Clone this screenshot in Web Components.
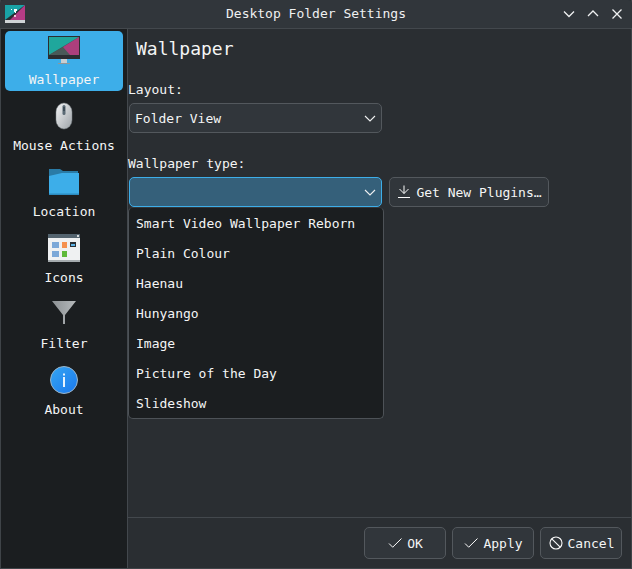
<!DOCTYPE html>
<html>
<head>
<meta charset="utf-8">
<title>Desktop Folder Settings</title>
<style>
html, body { margin: 0; height: 100%; background: #2a2e32; }
body { font: 13px/16px "DejaVu Sans Mono", monospace; color: #f4f5f5; }
</style>
</head>
<body>

<settings-window>
    <title-bar slot="top" caption="Desktop Folder Settings"></title-bar>
    <side-bar slot="side">
        <nav-item label="Wallpaper" icon="wallpaper" selected></nav-item>
        <nav-item label="Mouse Actions" icon="mouse"></nav-item>
        <nav-item label="Location" icon="folder"></nav-item>
        <nav-item label="Icons" icon="icons"></nav-item>
        <nav-item label="Filter" icon="filter"></nav-item>
        <nav-item label="About" icon="about"></nav-item>
    </side-bar>
    <wallpaper-page slot="main">
        <field-label style="margin-top:21px">Layout:</field-label>
        <combo-box text="Folder View"></combo-box>
        <field-label style="margin-top:22px">Wallpaper type:</field-label>
        <div style="display:flex;gap:7px">
            <combo-box focused>
                <popup-menu>
                    <menu-row>Smart Video Wallpaper Reborn</menu-row>
                    <menu-row>Plain Colour</menu-row>
                    <menu-row>Haenau</menu-row>
                    <menu-row>Hunyango</menu-row>
                    <menu-row>Image</menu-row>
                    <menu-row>Picture of the Day</menu-row>
                    <menu-row>Slideshow</menu-row>
                </popup-menu>
            </combo-box>
            <push-button icon="download" style="width:160px;height:30px">Get New Plugins…</push-button>
        </div>
    </wallpaper-page>
    <button-bar slot="bottom">
        <push-button icon="check">OK</push-button>
        <push-button icon="check">Apply</push-button>
        <push-button icon="cancel">Cancel</push-button>
    </button-bar>
</settings-window>

<script>
// icons for the side bar, 32x32
const NAV_ICONS = {
    wallpaper: `
        <svg width="32" height="32" viewBox="0 0 32 32">
            <rect x="0" y="2" width="32" height="23" fill="#2b2d30"/>
            <rect x="1" y="3" width="30" height="18" fill="#3e4a4e"/>
            <polygon points="1,3 31,3 1,21" fill="#1fa79c"/>
            <polygon points="31,3 31,21 13,21 15,13" fill="#ad3f7c"/>
            <polygon points="1,21 15,13 22,21" fill="#4a5a58"/>
            <rect x="13" y="25" width="6" height="4" fill="#c9ced1"/>
            <rect x="10" y="29" width="12" height="1" fill="#8f979b"/>
        </svg>`,
    mouse: `
        <svg width="32" height="32" viewBox="0 0 32 32">
            <defs><linearGradient id="m" x1="0" y1="0" x2="1" y2="1">
                <stop offset="0" stop-color="#f4f5f6"/><stop offset="1" stop-color="#9da3a8"/>
            </linearGradient></defs>
            <rect x="8" y="3" width="16" height="26" rx="8" ry="9" fill="url(#m)" stroke="#7d8489" stroke-width="0.500"/>
            <rect x="14.500" y="5" width="3" height="10" rx="1.500" fill="#5b6a75"/>
            <rect x="15" y="7" width="2" height="4" fill="#3e4d58"/>
        </svg>`,
    folder: `
        <svg width="32" height="32" viewBox="0 0 32 32">
            <path d="M1 3h11l3 2h15v6H1z" fill="#2a7ba6"/>
            <path d="M1 10l13-3h17v22H1z" fill="#3daee9"/>
            <rect x="1" y="27.500" width="30" height="1.500" fill="#2c8bc0"/>
        </svg>`,
    icons: `
        <svg width="32" height="32" viewBox="0 0 32 32">
            <rect x="0" y="2" width="32" height="28" fill="#eff1f2"/>
            <rect x="0" y="2" width="32" height="4" fill="#54646f"/>
            <rect x="29" y="3" width="2" height="2" fill="#d6dadc"/>
            <rect x="0" y="28" width="32" height="2" fill="#a5abae"/>
            <rect x="4" y="10" width="7" height="6" fill="#7ba8d8"/>
            <rect x="4" y="19" width="7" height="6" fill="#7ba8d8"/>
            <rect x="14" y="10" width="5" height="6" fill="#f5914f"/>
            <rect x="14" y="19" width="5" height="6" fill="#5fba3a"/>
            <rect x="22" y="10" width="6" height="5" fill="#2b2f33"/>
            <rect x="23" y="12" width="4" height="2" fill="#5cb3e6"/>
        </svg>`,
    filter: `
        <svg width="32" height="32" viewBox="0 0 32 32">
            <defs><linearGradient id="f" x1="0" y1="0" x2="1" y2="0">
                <stop offset="0" stop-color="#8c9194"/><stop offset="1" stop-color="#b5b9bb"/>
            </linearGradient></defs>
            <polygon points="4,3 28,3 17,17 17,26 15,26 15,17" fill="url(#f)"/>
        </svg>`,
    about: `
        <svg width="32" height="32" viewBox="0 0 32 32">
            <defs><linearGradient id="a" x1="0" y1="0" x2="1" y2="1">
                <stop offset="0" stop-color="#35a6f2"/><stop offset="1" stop-color="#1a78ee"/>
            </linearGradient></defs>
            <circle cx="16" cy="16" r="13.500" fill="url(#a)" stroke="#9cb4c6" stroke-width="1"/>
            <rect x="15" y="9.500" width="2" height="2" fill="#e8f4fd"/>
            <rect x="15" y="13" width="2" height="10" fill="#e8f4fd"/>
        </svg>`
};

const SMALL_ICONS = {
    check: '<path d="M2 8.500l3.700 3.700L14.500 3.500" fill="none" stroke="#fcfcfc"/>',
    cancel: '<circle cx="8" cy="8" r="6" fill="none" stroke="#fcfcfc" stroke-width="1.100"/><path d="M3.800 3.800l8.400 8.400" stroke="#fcfcfc" stroke-width="1.100"/>',
    download: '<path d="M8 1.500v8M3.500 5l4.500 4.500L12.500 5M2 13.500h12" fill="none" stroke="#fcfcfc"/>'
};

class SettingsWindow extends HTMLElement {
    constructor() {
        super();
        this.attachShadow({ mode: 'open' }).innerHTML = `
            <style>
                :host {
                    display: grid;
                    box-sizing: border-box;
                    width: 632px;
                    height: 569px;
                    grid-template-columns: 127px 1fr;
                    grid-template-rows: 29px 1fr 51px;
                    border: 1px solid #3f4448;
                    border-top: 0;
                    background: #2a2e32;
                }
                .top { grid-column: 1 / 3; display: block; }
                .side { grid-row: 2 / 4; display: block; }
            </style>
            <div class="top"><slot name="top"></slot></div>
            <div class="side"><slot name="side"></slot></div>
            <slot name="main"></slot>
            <slot name="bottom"></slot>
        `;
    }
}

class TitleBar extends HTMLElement {
    constructor() {
        super();
        this.attachShadow({ mode: 'open' }).innerHTML = `
            <style>
                :host {
                    display: grid;
                    grid-template-columns: 1fr auto 1fr;
                    align-items: center;
                    box-sizing: border-box;
                    height: 29px;
                    margin: 0 -1px;
                    padding: 0 7px 1px 7px;
                    background: #31363b;
                    border-bottom: 1px solid #43484d;
                    border-radius: 4px 4px 0 0;
                }
                .caption { text-align: center; color: #eff0f1; }
                .controls { display: flex; gap: 8px; justify-content: flex-end; }
                svg { display: block; }
                .app { margin-left: -2px; }
            </style>
            <svg class="app" width="20" height="20" viewBox="0 0 20 20">
                <rect y="1" width="20" height="18" fill="#2a2e32"/>
                <polygon points="0,1 20,1 0,16" fill="#19a3a6"/>
                <polygon points="20,1 20,16 5,16" fill="#b53c85"/>
                <path d="M9 5h3v2h-1v2h-1V8H9z" fill="#fff"/>
                <rect x="6" y="5" width="1" height="1" fill="#fff"/>
                <rect x="9" y="11" width="2" height="2" fill="#f5c6d8"/>
                <rect y="16" width="20" height="3" fill="#cfd3d6"/>
            </svg>
            <div class="caption">${this.getAttribute('caption')}</div>
            <div class="controls">
                <svg width="16" height="16" viewBox="0 0 16 16"><path d="M3 5.500l5 5 5-5" fill="none" stroke="#eff0f1" stroke-width="1.300"/></svg>
                <svg width="16" height="16" viewBox="0 0 16 16"><path d="M3 10l5-5 5 5" fill="none" stroke="#eff0f1" stroke-width="1.300"/></svg>
                <svg width="16" height="16" viewBox="0 0 16 16"><path d="M3.500 3.500l9 9M12.500 3.500l-9 9" fill="none" stroke="#eff0f1" stroke-width="1.300"/></svg>
            </div>
        `;
    }
}

class SideBar extends HTMLElement {
    constructor() {
        super();
        this.attachShadow({ mode: 'open' }).innerHTML = `
            <style>
                :host {
                    display: flex;
                    flex-direction: column;
                    gap: 6px;
                    box-sizing: border-box;
                    height: 539px;
                    padding: 2px 4px 0;
                    background: #1b1e20;
                    border-right: 1px solid #43484d;
                }
            </style>
            <slot></slot>
        `;
    }
}

class NavItem extends HTMLElement {
    constructor() {
        super();
        const icon = NAV_ICONS[this.getAttribute('icon')];
        this.attachShadow({ mode: 'open' }).innerHTML = `
            <style>
                :host {
                    display: flex;
                    flex-direction: column;
                    align-items: center;
                    height: 60px;
                    box-sizing: border-box;
                    padding-top: 3px;
                    border-radius: 5px;
                    white-space: nowrap;
                }
                :host([selected]) { background: #3daee9; }
                svg { display: block; }
                .label { margin-top: 6px; }
            </style>
            ${icon}
            <div class="label">${this.getAttribute('label')}</div>
        `;
    }
}

class WallpaperPage extends HTMLElement {
    constructor() {
        super();
        this.attachShadow({ mode: 'open' }).innerHTML = `
            <style>
                :host { display: block; padding-top: 9px; }
                h1 {
                    margin: 0 0 0 8px;
                    font-size: 18px;
                    line-height: 22px;
                    font-weight: normal;
                }
            </style>
            <h1>Wallpaper</h1>
            <slot></slot>
        `;
    }
}

class FieldLabel extends HTMLElement {
    constructor() {
        super();
        this.attachShadow({ mode: 'open' }).innerHTML = `
            <style>:host { display: block; padding-top: 1px; margin-bottom: 5px; }</style>
            <slot></slot>
        `;
    }
}

class ComboBox extends HTMLElement {
    constructor() {
        super();
        this.attachShadow({ mode: 'open' }).innerHTML = `
            <style>
                :host {
                    display: flex;
                    align-items: center;
                    position: relative;
                    box-sizing: border-box;
                    width: 253px;
                    height: 30px;
                    margin-left: 1px;
                    padding: 0 3px 0 5px;
                    background: #31363b;
                    border: 1px solid #53585d;
                    border-radius: 5px;
                }
                :host([focused]) { background: #35607a; border-color: #3daee9; }
                .text { flex: 1; margin-top: 2px; }
                svg { display: block; }
            </style>
            <div class="text">${this.getAttribute('text') || ''}</div>
            <svg width="16" height="16" viewBox="0 0 16 16"><path d="M3 6l5 5 5-5" fill="none" stroke="#eff0f1" stroke-width="1.100"/></svg>
            <slot></slot>
        `;
    }
}

// the open list of a combo, lies over the page
class PopupMenu extends HTMLElement {
    constructor() {
        super();
        this.attachShadow({ mode: 'open' }).innerHTML = `
            <style>
                :host {
                    position: absolute;
                    top: 29px;
                    left: -2px;
                    box-sizing: border-box;
                    width: 256px;
                    height: 212px;
                    background: #1b1e20;
                    border: 1px solid #4d5257;
                    border-top-color: #33373b;
                    border-radius: 5px;
                }
            </style>
            <slot></slot>
        `;
    }
}

class MenuRow extends HTMLElement {
    constructor() {
        super();
        this.attachShadow({ mode: 'open' }).innerHTML = `
            <style>
                :host {
                    display: flex;
                    align-items: center;
                    box-sizing: border-box;
                    height: 30px;
                    padding: 2px 0 0 7px;
                }
            </style>
            <slot></slot>
        `;
    }
}

class PushButton extends HTMLElement {
    constructor() {
        super();
        const icon = SMALL_ICONS[this.getAttribute('icon')];
        this.attachShadow({ mode: 'open' }).innerHTML = `
            <style>
                :host {
                    display: flex;
                    align-items: center;
                    justify-content: center;
                    gap: 4px;
                    box-sizing: border-box;
                    width: 82px;
                    height: 32px;
                    padding-top: 2px;
                    background: #31363b;
                    border: 1px solid #53585d;
                    border-radius: 5px;
                    white-space: nowrap;
                }
                svg { display: block; margin-top: -2px; }
            </style>
            <svg width="16" height="16" viewBox="0 0 16 16">${icon}</svg>
            <slot></slot>
        `;
    }
}

class ButtonBar extends HTMLElement {
    constructor() {
        super();
        this.attachShadow({ mode: 'open' }).innerHTML = `
            <style>
                :host {
                    display: flex;
                    justify-content: flex-end;
                    gap: 6px;
                    box-sizing: border-box;
                    padding: 9px 9px 0 0;
                    border-top: 1px solid #43484d;
                }
            </style>
            <slot></slot>
        `;
    }
}

customElements.define('settings-window', SettingsWindow);
customElements.define('title-bar', TitleBar);
customElements.define('side-bar', SideBar);
customElements.define('nav-item', NavItem);
customElements.define('wallpaper-page', WallpaperPage);
customElements.define('field-label', FieldLabel);
customElements.define('combo-box', ComboBox);
customElements.define('popup-menu', PopupMenu);
customElements.define('menu-row', MenuRow);
customElements.define('push-button', PushButton);
customElements.define('button-bar', ButtonBar);
</script>
</body>
</html>
